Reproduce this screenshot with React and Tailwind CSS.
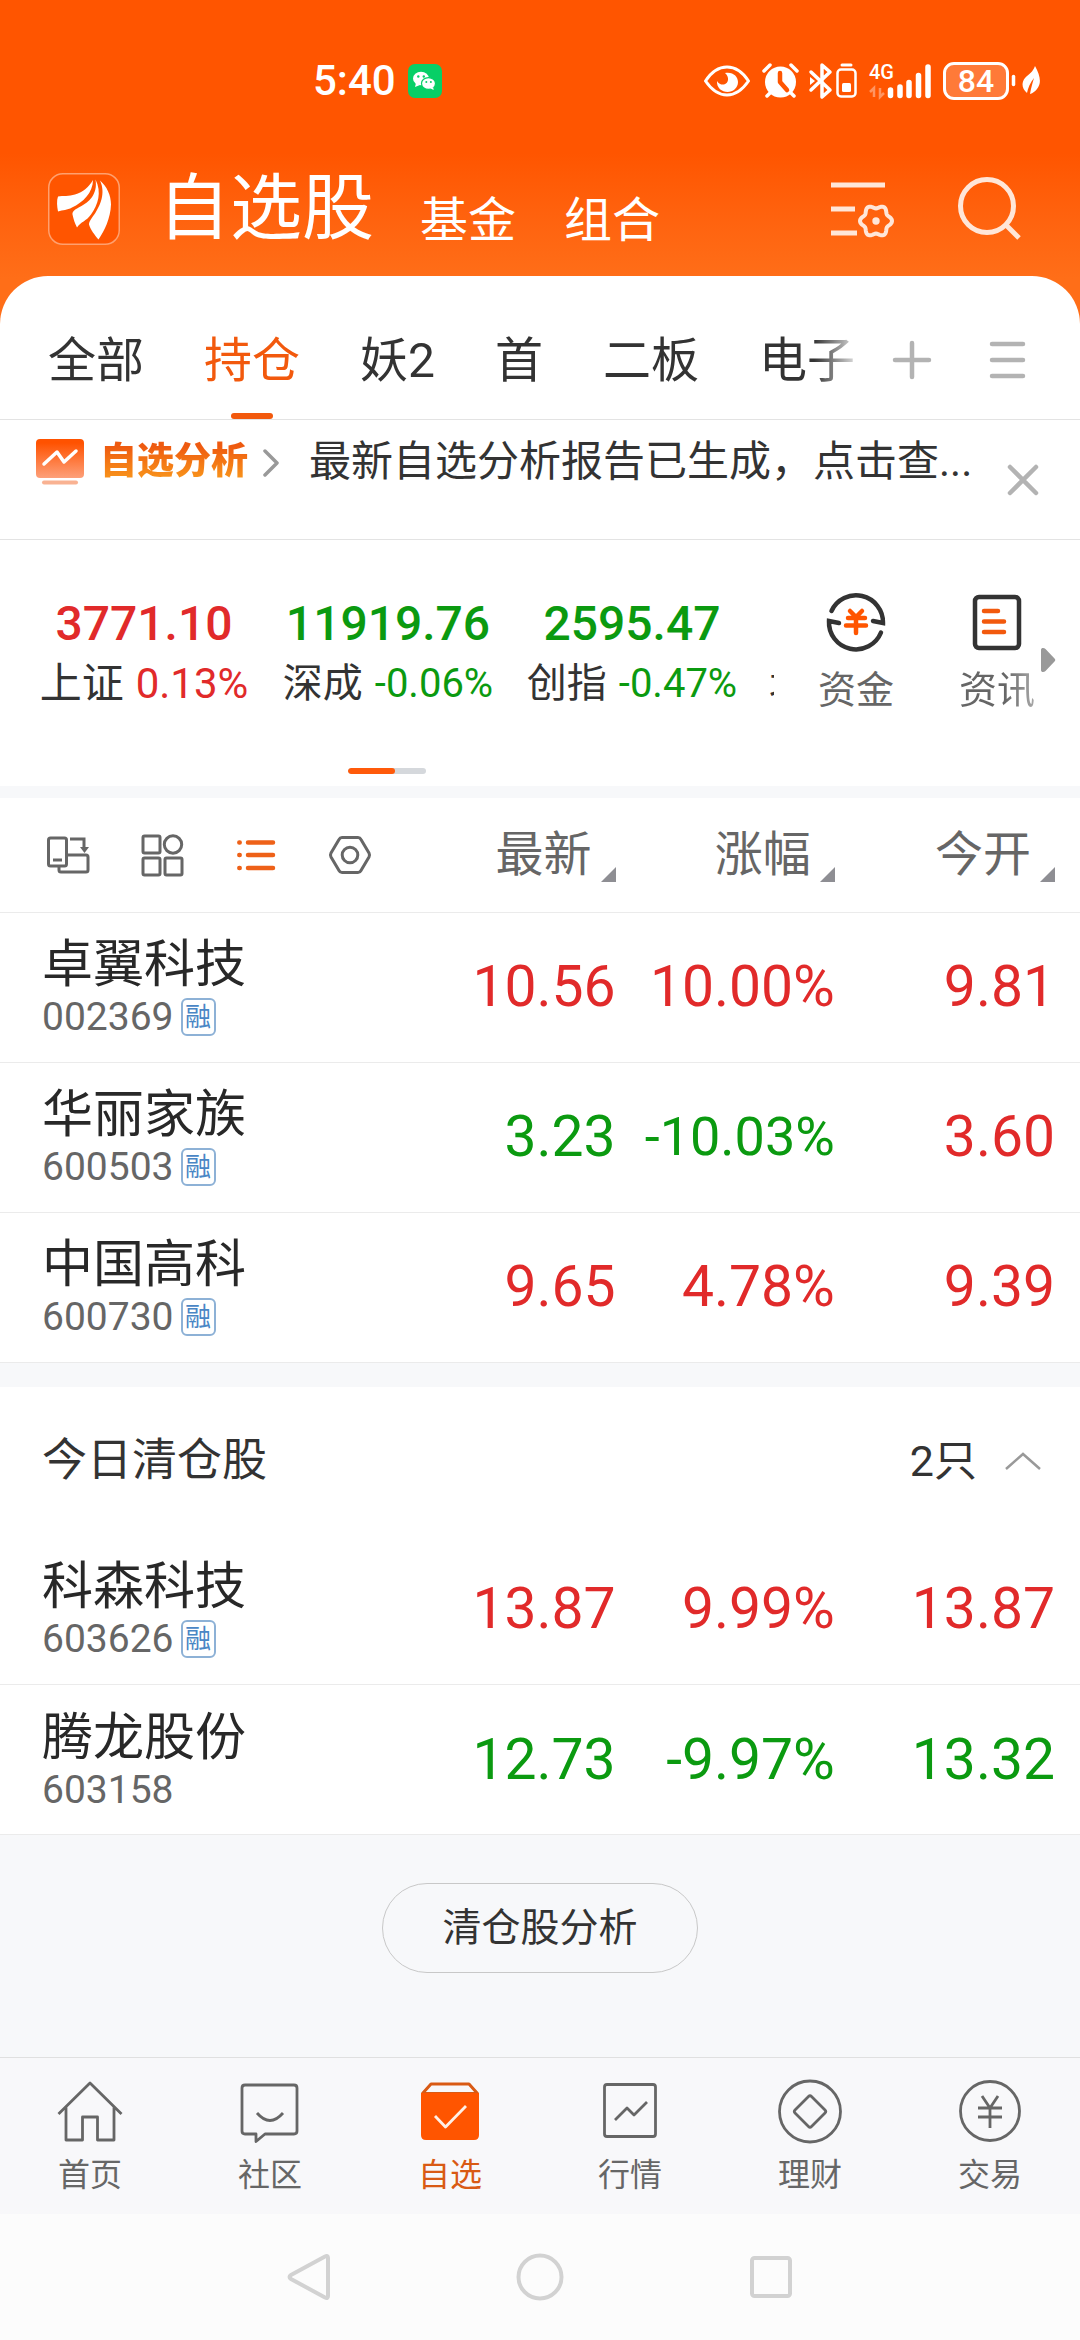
import React from "react";

const UP = "text-[#e12a2a]";
const DOWN = "text-[#0b9a10]";

const tabs = ["全部", "持仓", "妖2", "首", "二板", "电子"];

const indices = [
  { name: "上证", value: "3771.10", change: "0.13%", tone: UP, size: "text-[42px]" },
  { name: "深成", value: "11919.76", change: "-0.06%", tone: DOWN, size: "text-[40px]" },
  { name: "创指", value: "2595.47", change: "-0.47%", tone: DOWN, size: "text-[40px]" },
];

const holdings = [
  { name: "卓翼科技", code: "002369", margin: true, last: "10.56", change: "10.00%", open: "9.81", tone: UP, openTone: UP },
  { name: "华丽家族", code: "600503", margin: true, last: "3.23", change: "-10.03%", open: "3.60", tone: DOWN, openTone: UP, tight: true },
  { name: "中国高科", code: "600730", margin: true, last: "9.65", change: "4.78%", open: "9.39", tone: UP, openTone: UP },
];

const cleared = [
  { name: "科森科技", code: "603626", margin: true, last: "13.87", change: "9.99%", open: "13.87", tone: UP, openTone: UP },
  { name: "腾龙股份", code: "603158", margin: false, last: "12.73", change: "-9.97%", open: "13.32", tone: DOWN, openTone: DOWN },
];

function flowerPath(cx, cy, r, depth) {
  const points = [];
  for (let i = 0; i < 96; i += 1) {
    const a = (i / 96) * Math.PI * 2;
    const radius = r + depth * Math.cos(6 * a);
    points.push(`${(cx + radius * Math.cos(a)).toFixed(2)} ${(cy + radius * Math.sin(a)).toFixed(2)}`);
  }
  return `M${points.join("L")}Z`;
}

/* ---------- status bar ---------- */

function WeChatBadge() {
  return (
    <svg viewBox="0 0 34 34" className="size-[34px]" aria-hidden="true">
      <rect width="34" height="34" rx="7" fill="#07cf66" />
      <ellipse cx="13" cy="14.500" rx="8" ry="6.800" fill="#fff" />
      <path d="M8 19l-1 4 5-2z" fill="#fff" />
      <ellipse cx="20.500" cy="19.500" rx="7" ry="5.900" fill="#fff" stroke="#07cf66" strokeWidth="1.200" />
      <path d="M22.500 24.500l3.200 1.600-.6-3.200z" fill="#fff" />
      <circle cx="10.300" cy="12.500" r="1.200" fill="#07cf66" />
      <circle cx="15.800" cy="12.500" r="1.200" fill="#07cf66" />
      <circle cx="18.300" cy="18" r="1" fill="#07cf66" />
      <circle cx="22.900" cy="18" r="1" fill="#07cf66" />
    </svg>
  );
}

function StatusBar() {
  return (
    <div className="flex h-[150px] items-center pt-3 pr-[39px] pl-[313px] text-white">
      <span className="text-[42px] leading-[48px] font-medium">5:40</span>
      <span className="ml-3"><WeChatBadge /></span>
      <div className="ml-auto flex items-center">
        <svg viewBox="704 60 46 42" className="h-[42px] w-[46px]" aria-hidden="true">
          <path d="M705.500 81C712 71 719 67 727 67s15 4 21.500 14C742 90.500 735 95 727 95s-15-4.500-21.500-14z" fill="none" stroke="#fff" strokeWidth="3" strokeLinejoin="round" />
          <path d="M725 73c8-1.500 13 3.500 13 9 0 6-5 10-10.500 10S716.500 88 717 81c2 3 4.500 4 7 3.500 5-1 5.500-8 1-11.500z" fill="#fff" />
        </svg>
        <svg viewBox="760 60 40 42" className="ml-[10px] h-[42px] w-[40px]" aria-hidden="true">
          <circle cx="780.500" cy="82" r="15.500" fill="#fff" />
          <path d="M764 71l6-6M797 71l-6-6M767 96l4-4M794 96l-4-4" stroke="#fff" strokeWidth="3.500" strokeLinecap="round" />
          <path d="M780 73v9l7 8" fill="none" stroke="#ff5500" strokeWidth="4.500" strokeLinecap="round" strokeLinejoin="round" />
        </svg>
        <svg viewBox="808 60 50 42" className="ml-2 h-[42px] w-[50px]" aria-hidden="true">
          <path d="M811 72l19 18-8 7V65l8 7-19 18" fill="none" stroke="#fff" strokeWidth="3.500" strokeLinejoin="round" strokeLinecap="round" />
          <path d="M810 77l5 4-5 4z" fill="#fff" />
          <rect x="837.500" y="69.500" width="18" height="27" rx="3.500" fill="none" stroke="#fff" strokeWidth="2.500" />
          <path d="M842 65h9" stroke="#fff" strokeWidth="3" strokeLinecap="round" />
          <rect x="842" y="83" width="9" height="9" rx="1.500" fill="#fff" />
        </svg>
        <div className="relative ml-[11px] h-[42px] w-[62px]">
          <span className="absolute top-0 left-0 text-[20px] leading-[24px] font-medium">4G</span>
          <svg viewBox="869 60 62 42" className="h-[42px] w-[62px]" aria-hidden="true">
            <g stroke="#fff" strokeWidth="5.500" strokeLinecap="round">
              <path d="M890.500 90v5.500M900 87v8.500M909 82.500v13M918.500 75.500v20M928 67v28.500" />
            </g>
            <path d="M874 97V88l-4 4M880 88v9l4-4" fill="none" stroke="#ff9561" strokeWidth="2.500" />
          </svg>
        </div>
        <div className="relative ml-3 flex h-[38px] w-[66px] items-center justify-center rounded-[11px] border-[3px] border-white bg-[#ff7a38]">
          <span className="text-[32px] leading-[32px] font-medium">84</span>
        </div>
        <svg viewBox="1009 60 32 42" className="h-[42px] w-[32px]" aria-hidden="true">
          <path d="M1013.500 76.500v8" stroke="#fff" strokeWidth="3.500" strokeLinecap="round" />
          <path d="M1035 66c5 9 7 17 2 23-2 2.500-4 4-7 5 1-6 2.500-11 4-16-4 5-6 10-7 15-5-4-6-10-2-15 4-4 8-6 10-12z" fill="#fff" />
        </svg>
      </div>
    </div>
  );
}

/* ---------- header ---------- */

function Logo() {
  return (
    <svg viewBox="48 172 72 72" className="size-[72px]" aria-label="首页标志">
      <rect x="48.750" y="172.750" width="70.500" height="70.500" rx="14" fill="#ff5500" stroke="#ffa06e" strokeWidth="1.500" />
      <path d="M93 179c-4 7-10 12-18 14.500-6 2-12 1-17 2-1.500 4-1 10 0 15 5-2 9-1 14-4 11-5 21-15 21-27.500z" fill="#fff" />
      <path d="M95.500 178.500c2.500 15-7 23-15 27-5 2.500-8.500 5-8 8 1 5 2.500 9 4.500 13 4-6 9-6 14-13 7-10 11-22 4.500-35z" fill="#fff" />
      <path d="M100 179.500c6 13 0 25-5 33-3 4-6 8-6 11 1.500 5 6 11 9.500 15 6-9 12-21 12.500-35 0-9-4-18-11-24z" fill="#fff" />
    </svg>
  );
}

function Header() {
  return (
    <header className="-mb-16 bg-linear-to-b from-[#ff5500] from-45% to-[#ff6e18] to-82% pb-16">
      <StatusBar />
      <div className="flex h-[126px] items-center pr-[57px] pl-12">
        <a href="#home" className="mt-[-8px] shrink-0"><Logo /></a>
        <nav className="mt-[-8px] ml-[38px] flex items-end text-white">
          <button type="button" className="text-[72px] leading-[84px]">自选股</button>
          <button type="button" className="ml-[46px] text-[48px] leading-[60px]">基金</button>
          <button type="button" className="ml-12 text-[48px] leading-[60px]">组合</button>
        </nav>
        <button type="button" aria-label="列表设置" className="mt-[-8px] ml-auto">
          <svg viewBox="828 174 68 68" className="size-[68px]" fill="none" stroke="#ffe6d8" strokeWidth="5">
            <path d="M831 184h54M831 208h24M831 232h26" />
            <path d={flowerPath(876, 220, 14.3, 1.7)} strokeWidth="4" strokeLinejoin="round" />
            <circle cx="876" cy="220" r="3.700" fill="#ffe6d8" stroke="none" />
          </svg>
        </button>
        <button type="button" aria-label="搜索" className="mt-[-8px] ml-[59px]">
          <svg viewBox="955 174 68 68" className="size-[68px]" fill="none" stroke="#ffe6d8" strokeWidth="5">
            <circle cx="987" cy="205" r="26.500" />
            <path d="M1005 223l14 14" />
          </svg>
        </button>
      </div>
    </header>
  );
}

/* ---------- tabs and banner ---------- */

function Tabs() {
  return (
    <div className="flex h-36 items-stretch border-b border-[#e3e3e3] pr-13 pl-12">
      <div role="tablist" className="flex min-w-0 flex-1 gap-15 overflow-hidden [mask-image:linear-gradient(to_right,#000_calc(100%-50px),transparent)]">
        {tabs.map((tab, i) => (
          <button
            key={tab}
            type="button"
            role="tab"
            aria-selected={i === 1}
            className={`relative shrink-0 pt-[26px] text-[48px] leading-[60px] ${i === 1 ? "text-[#f2590d]" : "text-[#333]"}`}
          >
            {tab}
            {i === 1 && <span className="absolute bottom-0 left-1/2 h-1.5 w-[42px] -translate-x-1/2 rounded-full bg-[#f2590d]" />}
          </button>
        ))}
      </div>
      <button type="button" aria-label="添加分组" className="ml-7 shrink-0 pt-6">
        <svg viewBox="0 0 40 40" className="size-10" stroke="#b3b3b3" strokeWidth="4.500" strokeLinecap="round">
          <path d="M20 3v34M3 20h34" />
        </svg>
      </button>
      <button type="button" aria-label="管理分组" className="ml-[56px] shrink-0 pt-6">
        <svg viewBox="0 0 40 40" className="size-10" stroke="#b3b3b3" strokeWidth="4.500" strokeLinecap="round">
          <path d="M4 4h31M4 20h31M4 36h31" />
        </svg>
      </button>
    </div>
  );
}

function Banner() {
  return (
    <div className="flex h-[120px] items-start border-b border-[#e3e3e3] pt-4 pr-10 pl-9">
      <a href="#analysis" className="flex h-[52px] shrink-0 items-center">
        <svg viewBox="36 436 48 48" className="size-12" aria-hidden="true">
          <defs>
            <linearGradient id="report" x1="0" y1="0" x2="0" y2="1">
              <stop offset="0.100" stopColor="#ff5200" />
              <stop offset="1" stopColor="#fda07a" />
            </linearGradient>
          </defs>
          <rect x="36" y="437" width="48" height="39" rx="4" fill="url(#report)" />
          <path d="M44 462l13-12 7 10 12-11" fill="none" stroke="#fff" strokeWidth="3.500" strokeLinecap="round" strokeLinejoin="round" />
          <path d="M44 480.500h32" stroke="#f9b292" strokeWidth="4" strokeLinecap="round" />
        </svg>
        <span className="ml-4 bg-linear-to-b from-[#ee5a10] from-20% to-[#f99a1c] to-90% bg-clip-text text-[37px] leading-[52px] font-black text-transparent">自选分析</span>
        <svg viewBox="0 0 18 30" className="ml-[14px] h-[30px] w-[18px]" fill="none" stroke="#999" strokeWidth="3.500" strokeLinecap="round" strokeLinejoin="round" aria-hidden="true">
          <path d="M3 4l12 12L3 28" />
        </svg>
      </a>
      <a href="#report" className="ml-[29px] min-w-0 flex-1 truncate text-[42px] leading-[52px] text-[#333]">最新自选分析报告已生成，点击查...</a>
      <button type="button" aria-label="关闭" className="mt-[27px] shrink-0">
        <svg viewBox="0 0 34 34" className="size-[34px]" stroke="#b3b3b3" strokeWidth="4.500" strokeLinecap="round">
          <path d="M4 4l26 26M30 4L4 30" />
        </svg>
      </button>
    </div>
  );
}

/* ---------- index strip ---------- */

function IndexStrip() {
  return (
    <section className="bg-white pt-12">
      <div className="flex h-[150px]">
        <div className="flex min-w-0 flex-1 overflow-hidden pl-[22px]">
          {indices.map((item) => (
            <a key={item.name} href={`#${item.name}`} className="w-[244px] shrink-0 pt-1.5 text-center">
              <div className={`text-[48px] leading-[60px] font-medium ${item.tone}`}>{item.value}</div>
              <div className={`flex justify-center gap-3 leading-[60px] whitespace-nowrap ${item.size}`}>
                <span className="text-[#333]">{item.name}</span>
                <span className={item.tone}>{item.change}</span>
              </div>
            </a>
          ))}
          <a href="#beizheng" className="shrink-0 pt-[66px] pl-[15px] text-[38px] leading-[60px] text-[#333]">北</a>
        </div>
        <div className="relative flex w-[306px] shrink-0 pl-[11px]">
          <a href="#funds" className="flex w-[142px] flex-col items-center text-[38px] leading-[52px] text-[#666]">
            <svg viewBox="824 588 64 66" className="h-[66px] w-16" fill="none" aria-hidden="true">
              <path d="M831.500 611A27 27 0 0 1 883 623l-10-2" stroke="#333" strokeWidth="4.500" strokeLinecap="round" />
              <path d="M881 632.500A27 27 0 0 1 829 621l10 2" stroke="#333" strokeWidth="4.500" strokeLinecap="round" />
              <path d="M850 611l6 6 6-6M848 618h17M846 625.500h20M856 617v16" stroke="#ff5500" strokeWidth="4.500" strokeLinecap="round" />
            </svg>
            <span className="mt-[10px]">资金</span>
          </a>
          <a href="#news" className="flex w-[140px] flex-col items-center text-[38px] leading-[52px] text-[#666]">
            <svg viewBox="965 588 64 66" className="h-[66px] w-16" fill="none" strokeWidth="4.500" aria-hidden="true">
              <rect x="975" y="597" width="44" height="51" rx="4" stroke="#333" />
              <path d="M984 611h14M984 621.500h20M984 632h20" stroke="#f2590d" strokeLinecap="round" />
            </svg>
            <span className="mt-[10px] bg-linear-to-r from-[#666] from-60% to-[#aaa] bg-clip-text text-transparent">资讯</span>
          </a>
          <svg viewBox="1041 647 16 26" className="absolute top-[59px] right-6 h-[26px] w-4" aria-hidden="true">
            <path d="M1042 650c0-2.500 3-2.500 4.500-1l9 9.500c1 1 1 2 0 3l-9 9.500c-1.500 1.500-4.500 1.500-4.500-1z" fill="#999" />
          </svg>
        </div>
      </div>
      <div className="flex h-12 items-center">
        <div className="mt-[17px] ml-[348px] flex h-1.5 w-[78px] overflow-hidden rounded-full bg-[#d5d8dc]">
          <span className="w-[47px] rounded-full bg-[#ff5a0a]" />
        </div>
      </div>
    </section>
  );
}

/* ---------- stock tables ---------- */

function ViewIcons() {
  return (
    <div className="flex gap-[50px]">
      <button type="button" aria-label="切换屏幕方向">
        <svg viewBox="46 833 44 44" className="size-11" fill="none" stroke="#666" strokeWidth="3">
          <rect x="48.500" y="838" width="18" height="28" rx="2" />
          <path d="M53 860h9M70 839h14v9M67 855h19q2 0 2 2v13q0 2-2 2H61q-2 0-2-2v-4" />
          <path d="M80 847h9l-4.500 6z" fill="#666" stroke="none" />
        </svg>
      </button>
      <button type="button" aria-label="宫格视图">
        <svg viewBox="140 833 44 44" className="size-11" fill="none" stroke="#666" strokeWidth="3">
          <rect x="143" y="836" width="17" height="17" rx="1.500" />
          <circle cx="173" cy="844.500" r="8.700" />
          <rect x="143" y="858" width="17" height="17" rx="1.500" />
          <rect x="165" y="858" width="17" height="17" rx="1.500" />
        </svg>
      </button>
      <button type="button" aria-label="列表视图" aria-pressed="true">
        <svg viewBox="234 833 44 44" className="size-11" stroke="#ee6118" strokeWidth="4.500" strokeLinecap="round">
          <path d="M248 842.500h25M248 855h25M248 868h25M239.300 842.500h.4M239.300 855h.4M239.300 868h.4" />
        </svg>
      </button>
      <button type="button" aria-label="表格设置">
        <svg viewBox="328 833 44 44" className="size-11" fill="none" stroke="#666" strokeWidth="3">
          <path d="M342 837.500h16q2 0 3 2l8 13.500q1 2 0 4l-8 13.500q-1 2-3 2h-16q-2 0-3-2l-8-13.500q-1-2 0-4l8-13.500q1-2 3-2z" />
          <circle cx="350" cy="855" r="7.800" />
        </svg>
      </button>
    </div>
  );
}

function SortHeader({ label, className }) {
  return (
    <th scope="col" className={`p-0 font-normal ${className}`}>
      <button type="button" className="inline-flex items-end gap-[9px] text-[48px] leading-[60px] text-[#666]">
        {label}
        <svg viewBox="0 0 15 15" className="mb-[3px] size-[15px]" aria-hidden="true">
          <path d="M15 0v15H0z" fill="#8e8e93" />
        </svg>
      </button>
    </th>
  );
}

function Columns() {
  return (
    <colgroup>
      <col className="w-[37%]" />
      <col className="w-[20%]" />
      <col className="w-[20.3%]" />
      <col />
    </colgroup>
  );
}

function StockRow({ stock }) {
  return (
    <tr className="h-[150px] border-b border-[#ebebeb]">
      <th scope="row" className="py-0 pr-0 pl-[42px] text-left font-normal">
        <div className="text-[51px] leading-[60px] text-[#282828]">{stock.name}</div>
        <div className="flex items-center gap-[7px] text-[39px] leading-[44px] text-[#666]">
          {stock.code}
          {stock.margin && (
            <span className="flex h-[38px] w-[35px] items-center justify-center rounded-[6px] border-2 border-[#8db1d6] text-[26px] leading-[36px] text-[#4a86c5]">融</span>
          )}
        </div>
      </th>
      <td className={`p-0 text-right text-[57px] leading-[66px] ${stock.tone}`}>{stock.last}</td>
      <td className={`p-0 text-right leading-[66px] ${stock.tight ? "text-[54px]" : "text-[57px]"} ${stock.tone}`}>{stock.change}</td>
      <td className={`py-0 pr-[25px] pl-0 text-right text-[57px] leading-[66px] ${stock.openTone}`}>{stock.open}</td>
    </tr>
  );
}

function Holdings() {
  return (
    <table className="w-full table-fixed border-collapse bg-white">
      <Columns />
      <thead>
        <tr className="h-[114px] border-b border-[#ebebeb]">
          <td className="py-0 pr-0 pl-[46px]"><ViewIcons /></td>
          <SortHeader label="最新" className="text-right" />
          <SortHeader label="涨幅" className="text-right" />
          <SortHeader label="今开" className="pr-[25px] text-right" />
        </tr>
      </thead>
      <tbody>
        {holdings.map((s) => <StockRow key={s.code} stock={s} />)}
      </tbody>
    </table>
  );
}

function Cleared() {
  return (
    <section className="mt-6 bg-white">
      <div className="flex h-[148px] items-center justify-between pr-[38px] pl-[42px] text-[#333]">
        <h2 className="text-[45px] leading-[60px]">今日清仓股</h2>
        <button type="button" aria-expanded="true" className="flex items-center gap-[27px] text-[43px] leading-[60px]">
          2只
          <svg viewBox="0 0 38 20" className="h-5 w-[38px]" fill="none" stroke="#999" strokeWidth="2.500" aria-hidden="true">
            <path d="M2 18L19 3l17 15" />
          </svg>
        </button>
      </div>
      <table aria-label="今日清仓股" className="w-full table-fixed border-collapse">
        <Columns />
        <tbody>
          {cleared.map((s) => <StockRow key={s.code} stock={s} />)}
        </tbody>
      </table>
    </section>
  );
}

/* ---------- bottom navigation ---------- */

const navItems = [
  {
    label: "首页",
    icon: (
      <path d="M3.500 36L35 5l31.500 31M11 29.500v32.500h16.500V39h15v23H59V29.500" />
    ),
  },
  {
    label: "社区",
    icon: (
      <>
        <path d="M10 7h49q3 0 3 3v43q0 3-3 3H30l-9 7.500V56H10q-3 0-3-3V10q0-3 3-3z" />
        <path d="M22 35q13 15 26 0" />
      </>
    ),
  },
  {
    label: "自选",
    active: true,
    icon: (
      <>
        <path d="M7.500 15.500L16 6h38l8.500 9.500z" strokeWidth="3" />
        <path d="M6 15h58v42q0 5-5 5H11q-5 0-5-5z" fill="#ff5500" stroke="none" />
        <path d="M20 38l10.500 11L51 28" stroke="#fff0e6" />
      </>
    ),
  },
  {
    label: "行情",
    icon: (
      <>
        <rect x="9.500" y="6.500" width="51" height="52" rx="2.500" />
        <path d="M20 42l12-12 7 7 13-13" />
      </>
    ),
  },
  {
    label: "理财",
    icon: (
      <>
        <circle cx="35" cy="33.500" r="30.500" />
        <path d="M33.500 18.500q1.500-1.500 3 0L50 32q1.500 1.500 0 3L36.500 48.500q-1.500 1.500-3 0L20 35q-1.500-1.500 0-3z" />
      </>
    ),
  },
  {
    label: "交易",
    icon: (
      <>
        <circle cx="35" cy="33" r="29.500" />
        <path d="M27 18l8 12 8-12M23 30h24M23 39h24M35 30v20" />
      </>
    ),
  },
];

function BottomNav() {
  return (
    <nav className="grid h-[157px] grid-cols-6 border-t border-[#e0e0e0] bg-[#f8f8fa]">
      {navItems.map((item) => (
        <a
          key={item.label}
          href={`#${item.label}`}
          aria-current={item.active ? "page" : undefined}
          className={`flex flex-col items-center pt-5 text-[32px] leading-[40px] ${item.active ? "text-[#d95a14]" : "text-[#666]"}`}
        >
          <svg viewBox="0 0 70 70" className="size-[70px]" fill="none" stroke="currentColor" strokeWidth="2.800" strokeLinejoin="round" aria-hidden="true">
            {item.icon}
          </svg>
          <span className="mt-[7px]">{item.label}</span>
        </a>
      ))}
    </nav>
  );
}

function SystemBar() {
  return (
    <div className="flex h-[126px] items-center justify-center gap-[182px] bg-[#fcfcfc]">
      <button type="button" aria-label="返回">
        <svg viewBox="0 0 50 50" className="size-[50px]" fill="none" stroke="#d2d2d2" strokeWidth="4">
          <path d="M42 4.500q3-1.500 3 1.500v38q0 3-3 1.500L8 27q-3-2 0-4z" />
        </svg>
      </button>
      <button type="button" aria-label="主屏幕">
        <svg viewBox="0 0 50 50" className="size-[50px]" fill="none" stroke="#d2d2d2" strokeWidth="4">
          <circle cx="25" cy="25" r="21.500" />
        </svg>
      </button>
      <button type="button" aria-label="最近任务">
        <svg viewBox="0 0 50 50" className="size-[50px]" fill="none" stroke="#d2d2d2" strokeWidth="4">
          <rect x="5" y="6" width="38" height="38" rx="2.500" />
        </svg>
      </button>
    </div>
  );
}

export default function App() {
  return (
    <div className="flex min-h-screen flex-col bg-[#f7f8fa] font-[Roboto,'Noto_Sans_CJK_SC',sans-serif]">
      <Header />
      <main className="flex flex-col">
        <div className="rounded-t-[48px] bg-white">
          <Tabs />
          <Banner />
          <IndexStrip />
        </div>
        <div className="mt-3">
          <Holdings />
        </div>
        <Cleared />
        <div className="flex justify-center py-12">
          <button type="button" className="h-[90px] rounded-full border border-[#c8c8c8] px-[59px] text-[39px] leading-[60px] text-[#333]">清仓股分析</button>
        </div>
      </main>
      <footer className="mt-auto">
        <BottomNav />
        <SystemBar />
      </footer>
    </div>
  );
}
